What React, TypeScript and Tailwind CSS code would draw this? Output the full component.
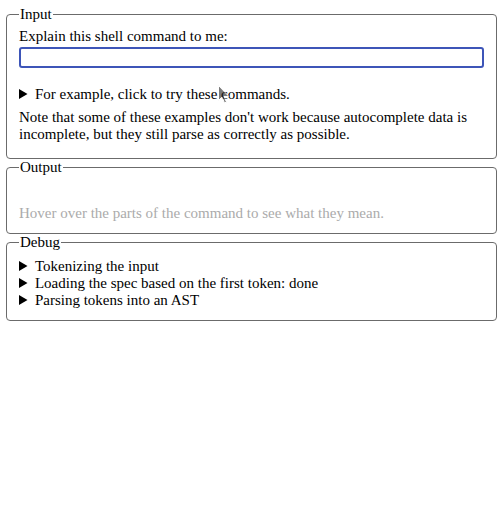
import React from 'react';

const debugSteps = [
  'Tokenizing the input',
  'Loading the spec based on the first token: done',
  'Parsing tokens into an AST',
];

function Panel({
  title,
  className,
  children,
}: {
  title: string;
  className?: string;
  children: React.ReactNode;
}) {
  return (
    <fieldset
      className={`ml-[6px] mr-[3px] border border-[#6b6b6b] rounded-[4px] px-[12px] ${className ?? ''}`}
    >
      <legend className="px-[1px] leading-[17px]">{title}</legend>
      {children}
    </fieldset>
  );
}

export default function App() {
  return (
    <div className="relative min-h-[527px] bg-white pt-[6px] font-['Liberation_Serif'] text-[15px] leading-[17px] text-black">
      {/* Input */}
      <Panel title="Input" className="pt-[5px] pb-[15px]">
        <label htmlFor="cmd" className="block">
          Explain this shell command to me:
        </label>
        <input
          id="cmd"
          type="text"
          className="mt-[2px] block h-[21px] w-full rounded-[3px] border-2 border-[#3d55b8] bg-white px-1 outline-none"
        />
        <details className="mt-[18px]">
          <summary className="cursor-pointer">For example, click to try these commands.</summary>
        </details>
        <p className="mt-[6px]">
          Note that some of these examples don&apos;t work because autocomplete data is incomplete, but they
          still parse as correctly as possible.
        </p>
      </Panel>

      {/* Output */}
      <Panel title="Output" className="pt-[5px] pb-[11px]">
        <div className="h-[24px]" />
        <p className="text-[#ababab]">Hover over the parts of the command to see what they mean.</p>
      </Panel>

      {/* Debug */}
      <Panel title="Debug" className="pt-[7px] pb-[11px]">
        {debugSteps.map((step) => (
          <details key={step}>
            <summary className="cursor-pointer">{step}</summary>
          </details>
        ))}
      </Panel>

      {/* mouse pointer caught in the screenshot */}
      <svg
        className="pointer-events-none absolute left-[218px] top-[85px] opacity-60"
        width="12"
        height="19"
        viewBox="0 0 12 19"
      >
        <path
          d="M0.5 0.5 L0.5 15.5 L4 12 L6.5 18 L8.5 17 L6 11.5 L11 11.5 Z"
          fill="#222"
          stroke="#fff"
          strokeWidth="1"
        />
      </svg>
    </div>
  );
}
